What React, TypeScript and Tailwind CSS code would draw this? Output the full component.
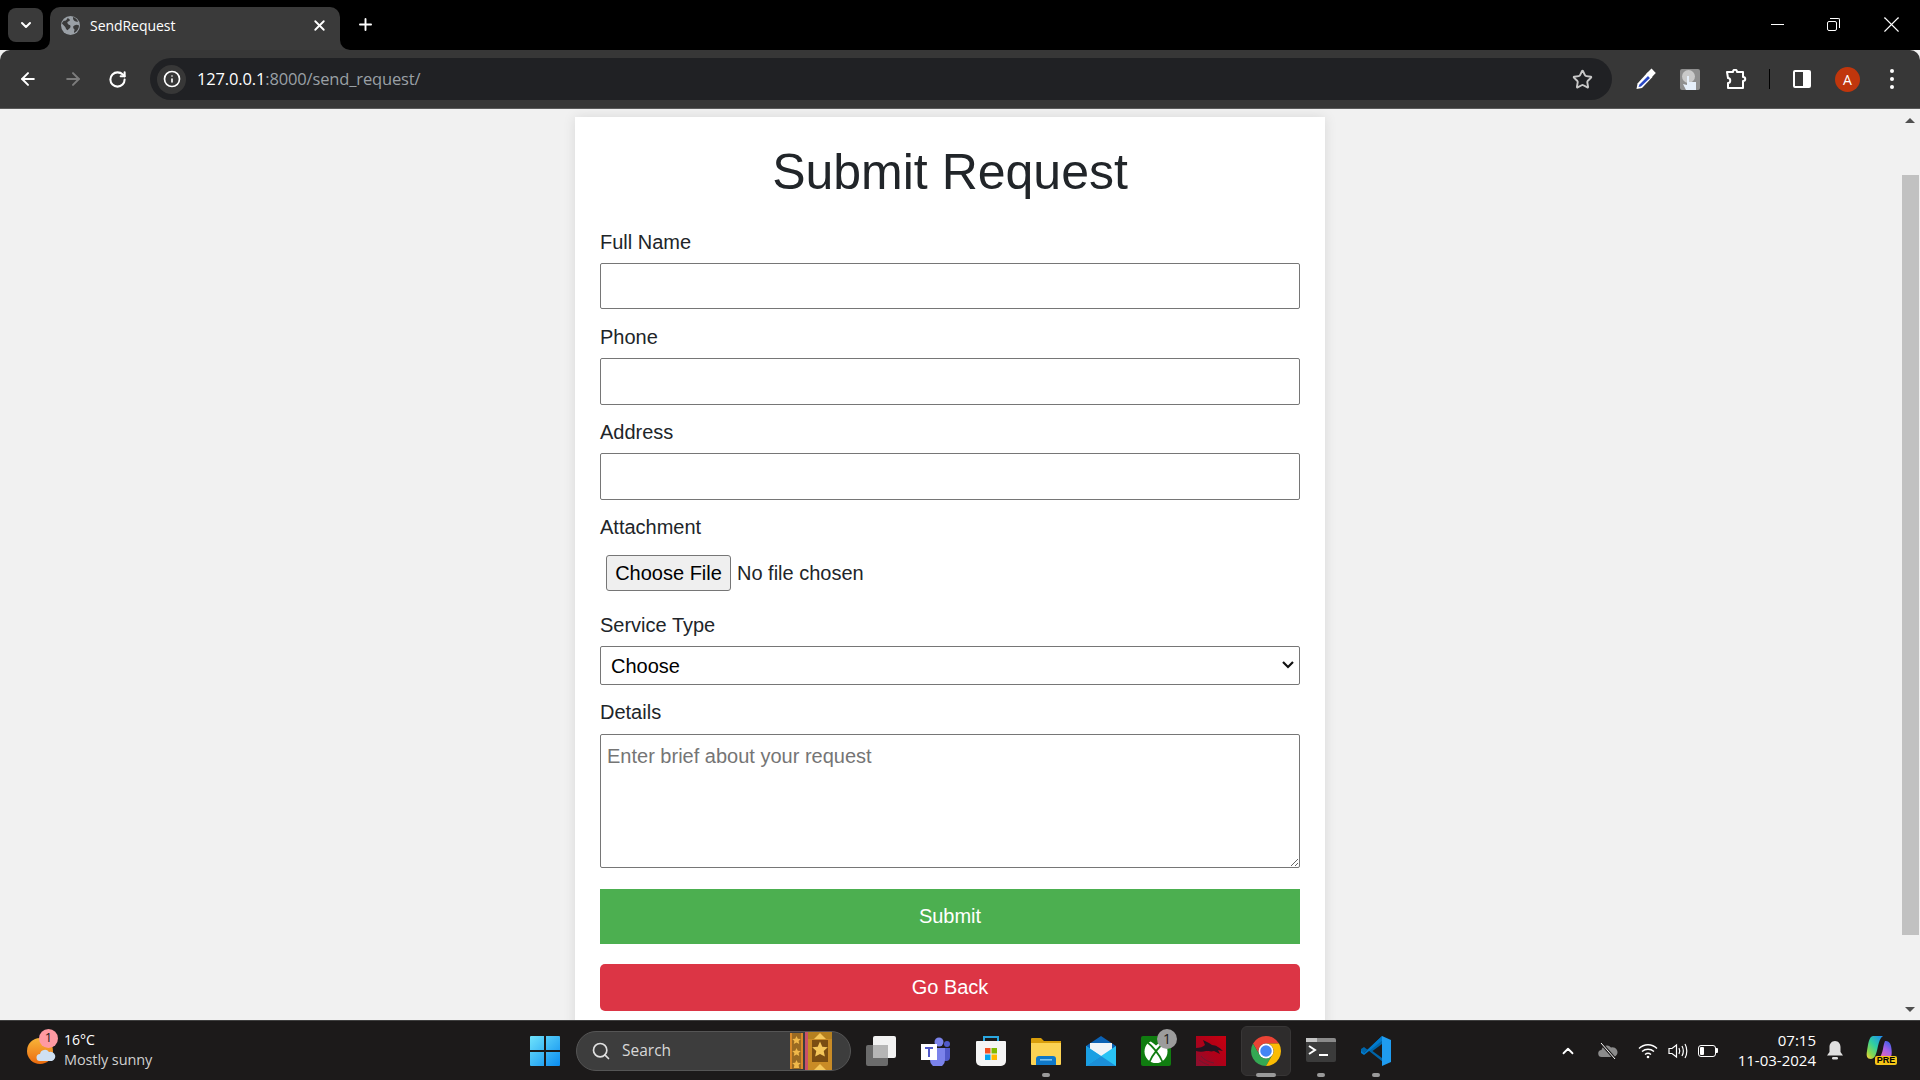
import { ArrowLeft, ArrowRight, ChevronDown, ChevronUp, Info, Plus, RotateCw, Search, Star, X } from "lucide-react"
import type { ReactNode } from "react"

const uiFont = "font-['Open_Sans','Noto_Sans',sans-serif]"

const Field = ({ label, children }: { label: string; children: ReactNode }) => (
  <>
    <label className="block h-[23px] leading-[25px] mb-[10px]">{label}</label>
    {children}
  </>
)

const GlobeIcon = () => (
  <svg width="19" height="19" viewBox="0 0 20 20">
    <circle cx="10" cy="10" r="10" fill="#9aa0a6" />
    <path d="M3 5c2 0 3-1 4-3 2 1 3 2 2 3S6 6 7 8s3 1 3 3-2 2-3 4c-2-1-2-3-3-4S2 9 1 8c0-1 1-2 2-3ZM13 1c2 1 4 2 5 5-2 0-3 0-4-1s-2-3-1-4ZM14 10c2-1 3-1 5 0 0 3-2 6-5 8-1-2 1-3 0-4s-2-3 0-4Z" fill="#3a3a3a" />
  </svg>
)

const Eyedropper = () => (
  <svg width="20" height="22" viewBox="0 0 20 22">
    <path d="M11.500 4.500 L1.500 15.500 L0.500 21 L6 20 L16.500 9 Z" fill="#fff" />
    <path d="M12 8 L3.500 16.500 L2.500 19 L5 18.500 L14 10 Z" fill="#2746c4" />
    <path d="M10.500 5.500 L15.500 0.500 L19.800 5 L14.500 10.500 Z" fill="#fff" />
  </svg>
)

const TouchExtension = () => (
  <div className="relative w-[20px] h-[21px] bg-[#8f8f8f] rounded-[2px] overflow-hidden">
    <div className="w-[13px] h-[13px] mt-[1px] ml-[2px] rounded-full bg-[#c9c9c9]" />
    <svg className="absolute left-[3px] top-[6px]" width="15" height="15" viewBox="0 0 15 15">
      <path d="M4 1h2v6h7v8H3L0 9l4 1Z" fill="#e6effa" />
    </svg>
  </div>
)

const PuzzleIcon = () => (
  <svg width="21" height="20" viewBox="0 0 21 20" fill="none" stroke="#fff" strokeWidth="2" strokeLinejoin="round">
    <path d="M1 3h6c0-3 4-3 4 0h6v5c3 0 3 4 0 4v7H2v-5c3 0 3-5 0-5Z" />
  </svg>
)

const PanelIcon = () => (
  <div className="flex w-[18px] h-[18px] rounded-[2px] border-2 border-white overflow-hidden">
    <div className="w-[8px] bg-[#373737]" />
    <div className="flex-1 bg-white" />
  </div>
)

const WeatherIcon = () => (
  <div className="relative w-[28px] h-[26px]">
    <div className="w-[26px] h-[26px] rounded-full bg-gradient-to-b from-[#f7b538] to-[#ea6a0c]" />
    <svg className="absolute left-[9px] top-[10px]" width="20" height="14" viewBox="0 0 20 14">
      <path d="M4 13a3.500 3.500 0 0 1 0-7 5 5 0 0 1 9-2 4.500 4.500 0 0 1 3 9Z" fill="#cfe0f2" />
    </svg>
    <div className="absolute -top-[9px] left-[12px] w-[19px] h-[19px] rounded-full bg-[#ff9aa2] text-[#1c1a1a] text-[13px] flex items-center justify-center">1</div>
  </div>
)

const WindowsLogo = () => (
  <svg width="30" height="30" viewBox="0 0 30 30">
    <defs>
      <linearGradient id="winGrad" x1="0" y1="0" x2="1" y2="1">
        <stop offset="0" stopColor="#6fe3fb" />
        <stop offset="1" stopColor="#0a8cf0" />
      </linearGradient>
    </defs>
    <path d="M0 1a1 1 0 0 1 1-1h13v14H0ZM16 0h13a1 1 0 0 1 1 1v13H16ZM0 16h14v14H1a1 1 0 0 1-1-1ZM16 16h14v13a1 1 0 0 1-1 1H16Z" fill="url(#winGrad)" />
  </svg>
)

const SearchArt = () => (
  <svg width="42" height="38" viewBox="0 0 42 38">
    <rect x="0" y="1" width="13" height="36" fill="#9a6a22" />
    <rect x="0" y="1" width="2" height="36" fill="#d98a2a" />
    <rect x="11" y="1" width="2" height="36" fill="#d98a2a" />
    <rect x="13" y="1" width="2" height="36" fill="#3d3d3d" />
    <rect x="15" y="0" width="3" height="38" fill="#c9506a" />
    <rect x="18" y="0" width="24" height="38" fill="#c98b26" />
    <rect x="22" y="8" width="16" height="22" fill="#7a4d12" />
    <rect x="18" y="0" width="24" height="7" fill="#b5801f" />
    <path d="M30 9.500l2.300 5.200 5.500.5-4.100 3.700 1.200 5.500L30 21.900l-4.900 2.500 1.200-5.500-4.100-3.700 5.500-.5Z" fill="#f4c65a" />
    <path d="M24 7l6-6 6 6Z" fill="#f4c65a" />
    <path d="M24 38l6-6 6 6Z" fill="#f4c65a" />
    <path d="M6.500 4l1.300 2.800 3 .3-2.200 2 .6 3-2.700-1.500L3.800 12.100l.6-3-2.200-2 3-.3ZM6.500 16l1.300 2.800 3 .3-2.200 2 .6 3-2.700-1.500-2.700 1.500.6-3-2.200-2 3-.3ZM6.500 28l1.300 2.800 3 .3-2.200 2 .6 2.900H3.800l.6-2.900-2.200-2 3-.3Z" fill="#f0b84a" />
  </svg>
)

const TaskViewIcon = () => (
  <svg width="30" height="30" viewBox="0 0 30 30">
    <rect x="0" y="9" width="22" height="21" rx="2" fill="#6b6b6b" />
    <rect x="7" y="0" width="23" height="22" rx="2" fill="#f2f2f2" />
    <rect x="7" y="9" width="15" height="13" fill="#b5b5b5" />
  </svg>
)

const TeamsIcon = () => (
  <svg width="30" height="30" viewBox="0 0 30 30">
    <circle cx="18" cy="6" r="4.500" fill="#7b83eb" />
    <circle cx="26" cy="8" r="3" fill="#5059c9" />
    <path d="M21 12h8v9a4 4 0 0 1-8 0Z" fill="#5059c9" />
    <path d="M9 12h15v12a7 7 0 0 1-15 0Z" fill="#7b83eb" />
    <rect x="0" y="8" width="16" height="16" fill="#fff" />
    <path d="M4 11h8v2H9v8H7v-8H4Z" fill="#5059c9" />
  </svg>
)

const StoreIcon = () => (
  <svg width="30" height="30" viewBox="0 0 30 30">
    <path d="M8 5V1h14v4" fill="none" stroke="#2aa7e0" strokeWidth="2" />
    <path d="M0 6a1 1 0 0 1 1-1h28a1 1 0 0 1 1 1v19a5 5 0 0 1-5 5H5a5 5 0 0 1-5-5Z" fill="#f5f5f5" />
    <rect x="9" y="12" width="5.500" height="5.500" fill="#f25022" />
    <rect x="15.500" y="12" width="5.500" height="5.500" fill="#7fba00" />
    <rect x="9" y="18.500" width="5.500" height="5.500" fill="#00a4ef" />
    <rect x="15.500" y="18.500" width="5.500" height="5.500" fill="#ffb900" />
  </svg>
)

const FolderIcon = () => (
  <svg width="30" height="30" viewBox="0 0 30 30">
    <path d="M0 3a1 1 0 0 1 1-1h9l3 3h17v6H0Z" fill="#d99e0b" />
    <path d="M0 7h30v21a1 1 0 0 1-1 1H1a1 1 0 0 1-1-1Z" fill="#fcd354" />
    <path d="M5 29v-6a3 3 0 0 1 3-3h14a3 3 0 0 1 3 3v6Z" fill="#0f78c8" />
    <rect x="9" y="23" width="12" height="1.600" fill="#7cc4f2" />
  </svg>
)

const MailIcon = () => (
  <svg width="30" height="30" viewBox="0 0 30 30">
    <path d="M0 10 15 0l15 10v4H0Z" fill="#0b62b5" />
    <path d="M4 7h22v9l-11 6-11-6Z" fill="#eef3f8" />
    <path d="M0 10l15 10 15-10v20H0Z" fill="#29c3f5" />
    <path d="M0 10l15 10-15 10Z" fill="#1a9fe3" />
    <path d="M0 30 15 20l15 10Z" fill="#1b8fd8" />
  </svg>
)

const XboxIcon = () => (
  <div className="relative w-[30px] h-[30px] bg-[#107c10] rounded-[2px]">
    <svg width="30" height="30" viewBox="0 0 30 30">
      <circle cx="15" cy="15.500" r="11.500" fill="#fff" />
      <path d="M6 6C10 9 18 17 22 27" fill="none" stroke="#107c10" strokeWidth="1.800" />
      <path d="M24 6C20 9 12 17 8 27" fill="none" stroke="#107c10" strokeWidth="1.800" />
      <path d="M8 4.500C11 6.500 13 7.500 15 9.500c2-2 4-3 7-5C18 2.500 12 2.500 8 4.500Z" fill="#107c10" />
    </svg>
    <div className="absolute -top-[7px] left-[16px] w-[20px] h-[20px] rounded-full bg-[#9c9c9c] text-[#1c1a1a] text-[14px] flex items-center justify-center">1</div>
  </div>
)

const DragonIcon = () => (
  <svg width="30" height="30" viewBox="0 0 30 30">
    <defs>
      <linearGradient id="dragonGrad" x1="0" y1="1" x2="1" y2="0">
        <stop offset="0" stopColor="#8a1030" />
        <stop offset="0.5" stopColor="#b00018" />
        <stop offset="1" stopColor="#c80010" />
      </linearGradient>
    </defs>
    <rect width="30" height="30" fill="url(#dragonGrad)" />
    <path d="M0 12c4 0 7-1 9-3L7 4l6 3 3 2c4 0 8 3 11 6l-5-1 2 4-6-3c-3 1-5 0-8 0-3 1-7 1-10 0Z" fill="#241420" />
    <path d="M5 20c3 4 8 6 13 7M3 24c3 2 6 4 10 5" stroke="#6e1a30" fill="none" />
  </svg>
)

const ChromeIcon = () => (
  <svg width="30" height="30" viewBox="0 0 24 24">
    <path d="M1.610 6A12 12 0 0 1 22.390 6H12A6 6 0 0 0 6.800 15Z" fill="#ea4335" />
    <path d="M1.610 6A12 12 0 0 0 12 24L17.200 15A6 6 0 0 1 6.800 15Z" fill="#34a853" />
    <path d="M22.390 6A12 12 0 0 1 12 24L17.200 15A6 6 0 0 0 12 6Z" fill="#fbbc04" />
    <circle cx="12" cy="12" r="6" fill="#fff" />
    <circle cx="12" cy="12" r="4.600" fill="#4285f4" />
  </svg>
)

const TerminalIcon = () => (
  <svg width="30" height="30" viewBox="0 0 30 30">
    <rect x="0" y="2" width="30" height="24" rx="2" fill="#3b3b3b" />
    <path d="M2 2h26a2 2 0 0 1 2 2v2H0V4a2 2 0 0 1 2-2Z" fill="#8a8a8a" />
    <rect x="0" y="2" width="11" height="4" fill="#c4c4c4" />
    <path d="M3 10l6 4-6 4" fill="none" stroke="#fff" strokeWidth="2" />
    <rect x="13" y="18" width="9" height="2" fill="#fff" />
  </svg>
)

const VsCodeIcon = () => (
  <svg width="30" height="30" viewBox="0 0 30 30">
    <path d="M21 0 2 18l-2-1.500V13L3 11l19 15-1 4Z" fill="#0065a9" />
    <path d="M21 0 3 17l-3-2.500V17l3 2L22 4Z" fill="#007acc" />
    <path d="M21 0l9 4v22l-9 4Z" fill="#1f9cf0" />
    <path d="M21 8 11.500 15 21 22Z" fill="#1c1a1a" />
  </svg>
)

const CopilotIcon = () => (
  <div className="relative w-[29px] h-[29px]">
    <svg width="27" height="24" viewBox="0 0 27 24">
      <defs>
        <linearGradient id="copilotA" x1="0.9" y1="0" x2="0.1" y2="1">
          <stop offset="0" stopColor="#1f8ef0" />
          <stop offset="0.45" stopColor="#2fd0a0" />
          <stop offset="0.8" stopColor="#8ed94a" />
          <stop offset="1" stopColor="#f0d040" />
        </linearGradient>
        <linearGradient id="copilotB" x1="0.8" y1="0" x2="0.2" y2="1">
          <stop offset="0" stopColor="#3a60e8" />
          <stop offset="0.45" stopColor="#a860e8" />
          <stop offset="1" stopColor="#f06aa8" />
        </linearGradient>
      </defs>
      <path d="M7 0h10c-3 2-4 6-5 10s-2 13-7 13c-4 0-5-3-4-8C2 9 3 0 7 0Z" fill="url(#copilotA)" />
      <path d="M19 5c3 0 5 1 6 5 1 5 2 13-4 13h-9c3-2 4-6 5-10 .5-3 1-6 2-8Z" fill="url(#copilotB)" />
    </svg>
    <div className="absolute left-[9px] top-[20px] w-[22px] h-[9px] bg-[#f5c518] rounded-[2px] text-black text-[9px] leading-[9px] font-bold text-center font-['Liberation_Sans',sans-serif]">PRE</div>
  </div>
)

const WifiIcon = () => (
  <svg width="20" height="16" viewBox="0 0 20 16" fill="none" stroke="#fff" strokeWidth="1.400">
    <path d="M1 5.500c5-5 13-5 18 0M4 8.500c3.500-3 8.500-3 12 0M7 11.500c1.800-1.400 4.200-1.400 6 0" />
    <circle cx="10" cy="14" r="1.300" fill="#fff" stroke="none" />
  </svg>
)

const SpeakerIcon = () => (
  <svg width="20" height="16" viewBox="0 0 20 16" fill="none" stroke="#fff" strokeWidth="1.200">
    <path d="M1 5.500h3L8.500 2v12L4 10.500H1Z" />
    <path d="M11 5c1 2 1 4 0 6M14 3c1.600 3 1.600 7 0 10M17 1c2.400 4 2.400 10 0 14" />
  </svg>
)

const BatteryIcon = () => (
  <div className="flex items-center">
    <div className="w-[18px] h-[12px] rounded-[3px] border border-white p-[1px]">
      <div className="w-[4px] h-full bg-white rounded-[1px]" />
    </div>
    <div className="w-[2px] h-[5px] bg-white rounded-r-[1px]" />
  </div>
)

const OneDriveOff = () => (
  <svg width="20" height="16" viewBox="0 0 20 16">
    <path d="M4 14a3.500 3.500 0 0 1-.5-7A5.500 5.500 0 0 1 13 4.500 4.500 4.500 0 0 1 16 14Z" fill="#8b8b8b" />
    <path d="M3 0l14 16" stroke="#1c1a1a" strokeWidth="3" />
    <path d="M3 0l14 16" stroke="#fff" strokeWidth="1" />
  </svg>
)

const BellIcon = () => (
  <svg width="16" height="19" viewBox="0 0 16 19">
    <path d="M8 0c3.500 0 5.500 3 5.500 6v5L16 14.500H0L2.500 11V6C2.500 3 4.500 0 8 0Z" fill="#e0e0e0" />
    <rect x="5" y="16" width="6" height="2.500" rx="1.200" fill="#e0e0e0" />
  </svg>
)

const Indicator = ({ wide }: { wide?: boolean }) => (
  <div className={`absolute top-[37px] h-[4px] rounded-full bg-[#9a9a9a] ${wide ? "left-[5px] w-[20px]" : "left-[11px] w-[8px]"}`} />
)

export default function App() {
  return (
    <div className="h-screen w-full flex flex-col overflow-hidden bg-[#f1f1f1] font-['Liberation_Sans',Arial,sans-serif] text-[20px] text-[#212529]">
      {/* tab strip */}
      <div className={`h-[50px] shrink-0 bg-black flex items-start text-white ${uiFont}`}>
        <div className="ml-[8px] mt-[8px] w-[35px] h-[34px] rounded-lg bg-[#3a3a3a] flex items-center justify-center">
          <ChevronDown size={16} strokeWidth={3} />
        </div>
        <div className="relative ml-[7px] mt-[7px] w-[290px] h-[43px] pb-[6px] bg-[#3a3a3a] rounded-t-[10px] flex items-center">
          <div className="absolute -left-[10px] bottom-0 w-[10px] h-[10px] bg-[#3a3a3a]">
            <div className="w-full h-full bg-black rounded-br-[10px]" />
          </div>
          <div className="absolute -right-[10px] bottom-0 w-[10px] h-[10px] bg-[#3a3a3a]">
            <div className="w-full h-full bg-black rounded-bl-[10px]" />
          </div>
          <div className="ml-[11px] flex"><GlobeIcon /></div>
          <span className="ml-[10px] text-[14px] tracking-[-0.05px]">SendRequest</span>
          <X className="ml-auto mr-[12px]" size={17} strokeWidth={2.6} />
        </div>
        <Plus className="ml-[16px] mt-[15px]" size={19} strokeWidth={2.4} />
        <div className="ml-auto mt-[18px] flex items-start">
          <div className="w-[13px] h-[1px] bg-white mt-[6px]" />
          <div className="relative ml-[43px] w-[13px] h-[13px]">
            <div className="absolute left-0 bottom-0 w-[10px] h-[10px] border border-white rounded-[2px]" />
            <div className="absolute right-0 top-0 w-[10px] h-[10px] border-t border-r border-white rounded-tr-[2px]" />
          </div>
          <X className="ml-[38px] mr-[15px] -mt-[7px]" size={27} strokeWidth={1} />
        </div>
      </div>

      {/* toolbar */}
      <div className={`h-[59px] shrink-0 bg-[#373737] border-b border-[#5a5a5a] rounded-t-[10px] flex items-center text-white ${uiFont} relative`}>
        <ArrowLeft className="ml-[18px]" size={20} strokeWidth={2.4} />
        <ArrowRight className="ml-[25px] text-[#7c7c7c]" size={20} strokeWidth={2.4} />
        <RotateCw className="ml-[25px]" size={19} strokeWidth={2.6} />
        <div className="ml-[23px] w-[1462px] h-[42px] rounded-full bg-[#202124] flex items-center">
          <div className="ml-[7px] w-[29px] h-[29px] rounded-full bg-[#373737] flex items-center justify-center">
            <Info size={18} strokeWidth={2.2} />
          </div>
          <span className="ml-[11px] mt-[1px] text-[16.5px] tracking-[-0.15px]">
            127.0.0.1<span className="text-[#9aa0a6]">:8000/send_request/</span>
          </span>
          <Star className="ml-auto mr-[19px] text-[#c8c8c8]" size={21} strokeWidth={2.2} />
        </div>
        <div className="ml-[24px] flex"><Eyedropper /></div>
        <div className="ml-[24px]"><TouchExtension /></div>
        <div className="ml-[26px] flex"><PuzzleIcon /></div>
        <div className="ml-[22px] w-[1px] h-[20px] bg-black" />
        <div className="ml-[23px]"><PanelIcon /></div>
        <div className="ml-[24px] w-[25px] h-[25px] rounded-full bg-[#c0360c] text-white text-[14px] flex items-center justify-center">A</div>
        <div className="ml-[30px] flex flex-col gap-[4px]">
          <div className="w-[4px] h-[4px] rounded-full bg-white" />
          <div className="w-[4px] h-[4px] rounded-full bg-white" />
          <div className="w-[4px] h-[4px] rounded-full bg-white" />
        </div>
      </div>

      {/* page */}
      <div className="flex-1 min-h-0 flex overflow-hidden">
        <div className="flex-1 flex justify-center">
          <div className="w-[750px] h-fit mt-[8px] bg-white px-[25px] pt-[25px] pb-[25px] shadow-[0_0_12px_rgba(0,0,0,0.1)]">
            <h1 className="text-[50px] leading-[60px] text-center mb-[28px]">Submit Request</h1>
            <form>
              <Field label="Full Name">
                <input className="block w-full h-[46px] mb-[16px] border border-[#767676] rounded-[2px] bg-white" />
              </Field>
              <Field label="Phone">
                <input className="block w-full h-[47px] mb-[15px] border border-[#767676] rounded-[2px] bg-white" />
              </Field>
              <Field label="Address">
                <input className="block w-full h-[47px] mb-[15px] border border-[#767676] rounded-[2px] bg-white" />
              </Field>
              <Field label="Attachment">
                <input
                  type="file"
                  className="block w-full h-[50px] mb-[15px] px-[6px] py-[7px] file:h-[36px] file:w-[125px] file:mr-[6px] file:border file:border-[#767676] file:rounded-[3px] file:bg-[#efefef] file:text-black file:text-[20px]"
                />
              </Field>
              <Field label="Service Type">
                <div className="relative mb-[15px]">
                  <select className="block w-full h-[39px] pl-[10px] appearance-none border border-[#767676] rounded-[2px] bg-white text-black">
                    <option>Choose</option>
                  </select>
                  <svg className="absolute right-[6px] top-[14px]" width="12" height="10" viewBox="0 0 12 10" fill="none" stroke="#111" strokeWidth="2.2">
                    <path d="M1 2l5 5 5-5" />
                  </svg>
                </div>
              </Field>
              <Field label="Details">
                <textarea
                  placeholder="Enter brief about your request"
                  className="block w-full h-[134px] mt-[11px] mb-[21px] p-[6px] border border-[#767676] rounded-[2px] bg-white placeholder:text-[#757575]"
                />
              </Field>
              <button type="button" className="block w-full h-[55px] mb-[20px] pb-[2px] bg-[#4caf50] text-white">Submit</button>
              <button type="button" className="block w-full h-[47px] pb-[2px] bg-[#dc3545] text-white rounded-[5px]">Go Back</button>
            </form>
          </div>
        </div>
        {/* scrollbar */}
        <div className="w-[20px] shrink-0 bg-[#f1f1f1] flex flex-col items-center">
          <div className="mt-[9px] w-0 h-0 border-x-[5px] border-x-transparent border-b-[5px] border-b-[#505050]" />
          <div className="mt-[52px] w-[17px] h-[760px] bg-[#c1c1c1]" />
          <div className="mt-auto mb-[8px] w-0 h-0 border-x-[5px] border-x-transparent border-t-[5px] border-t-[#505050]" />
        </div>
      </div>

      {/* taskbar */}
      <div className={`h-[60px] shrink-0 bg-[#1c1a1a] border-t border-[#3f3f3f] flex items-center text-white ${uiFont}`}>
        <div className="w-[530px] shrink-0 pl-[27px] flex items-center">
          <WeatherIcon />
          <div className="ml-[9px] -mt-[2px] text-[14.5px] leading-[20px]">
            <div className="text-[14px]">16°C</div>
            <div className="text-[#d0d0d0] tracking-[-0.1px]">Mostly sunny</div>
          </div>
        </div>
        <WindowsLogo />
        <div className="ml-[16px] w-[275px] h-[40px] rounded-full bg-[#3d3d3d] border border-[#555] flex items-center">
          <Search className="ml-[14px] text-[#e0e0e0]" size={20} strokeWidth={2} />
          <span className="ml-[11px] text-[15.5px] text-[#d8d8d8]">Search</span>
          <div className="ml-auto mr-[18px] flex"><SearchArt /></div>
        </div>
        <div className="ml-[15px] flex gap-[25px]">
          <div className="flex"><TaskViewIcon /></div>
          <div className="flex"><TeamsIcon /></div>
          <div className="flex"><StoreIcon /></div>
          <div className="relative flex"><FolderIcon /><Indicator /></div>
          <div className="flex"><MailIcon /></div>
          <XboxIcon />
          <div className="flex"><DragonIcon /></div>
          <div className="relative flex">
            <div className="absolute -left-[10px] -top-[10px] w-[50px] h-[50px] rounded-md bg-[#2e2c2c] border border-[#383636]" />
            <div className="relative flex"><ChromeIcon /></div>
            <Indicator wide />
          </div>
          <div className="relative flex"><TerminalIcon /><Indicator /></div>
          <div className="relative flex"><VsCodeIcon /><Indicator /></div>
        </div>
        <div className="ml-auto pr-[25px] flex items-center">
          <ChevronUp size={18} strokeWidth={2.4} />
          <div className="ml-[21px] flex"><OneDriveOff /></div>
          <div className="ml-[20px] flex"><WifiIcon /></div>
          <div className="ml-[10px] flex"><SpeakerIcon /></div>
          <div className="ml-[10px]"><BatteryIcon /></div>
          <div className="w-[98px] -mt-[1px] text-right text-[15px] leading-[20px]">
            <div>07:15</div>
            <div>11-03-2024</div>
          </div>
          <div className="ml-[11px] flex"><BellIcon /></div>
          <div className="ml-[23px]"><CopilotIcon /></div>
        </div>
      </div>
    </div>
  )
}
